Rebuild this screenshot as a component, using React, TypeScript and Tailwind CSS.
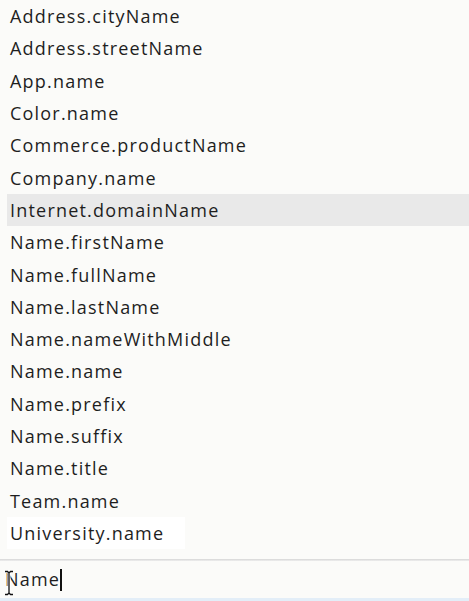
const options = [
  "Address.cityName",
  "Address.streetName",
  "App.name",
  "Color.name",
  "Commerce.productName",
  "Company.name",
  "Internet.domainName",
  "Name.firstName",
  "Name.fullName",
  "Name.lastName",
  "Name.nameWithMiddle",
  "Name.name",
  "Name.prefix",
  "Name.suffix",
  "Name.title",
  "Team.name",
  "University.name",
];

const highlighted = "Internet.domainName";

export default function App() {
  return (
    <div
      className="flex h-[601px] w-[469px] flex-col overflow-hidden bg-[#fbfbf9] text-[#1e1e1e]"
      style={{ fontFamily: '"Open Sans", "Noto Sans", sans-serif' }}
    >
      <ul className="flex flex-col">
        {options.map((opt) => (
          <li
            key={opt}
            className={`ml-[7px] flex h-[32.3px] items-center pl-[3px] text-[18px] leading-none tracking-[1.2px] ${
              opt === highlighted
                ? "bg-[#e9e9e9]"
                : opt === "University.name"
                  ? "w-[178px] bg-white"
                  : ""
            }`}
          >
            {opt}
          </li>
        ))}
      </ul>

      <div className="mt-[10px] h-[2px] bg-gradient-to-b from-[#d6d6d6] to-[#efefef]" />

      <div className="relative flex h-[37px] items-center pl-[5px] text-[18px] tracking-[1.2px]">
        <span>Name</span>
        <span className="h-[22px] w-[2px] bg-[#111]" />
        <svg
          className="absolute left-[3px] top-[9px]"
          width="12"
          height="26"
          viewBox="0 0 12 26"
        >
          <path
            d="M2 1.5h2.5L6 3l1.5-1.5H10M6 3v20M2 24.5h2.5L6 23l1.5 1.5H10"
            fill="none"
            stroke="#fff"
            strokeWidth="3"
          />
          <path
            d="M2 1.5h2.5L6 3l1.5-1.5H10M6 3v20M2 24.5h2.5L6 23l1.5 1.5H10"
            fill="none"
            stroke="#111"
            strokeWidth="1.3"
          />
        </svg>
      </div>
      <div className="h-[3px] bg-[#e3eef8]" />
    </div>
  );
}
